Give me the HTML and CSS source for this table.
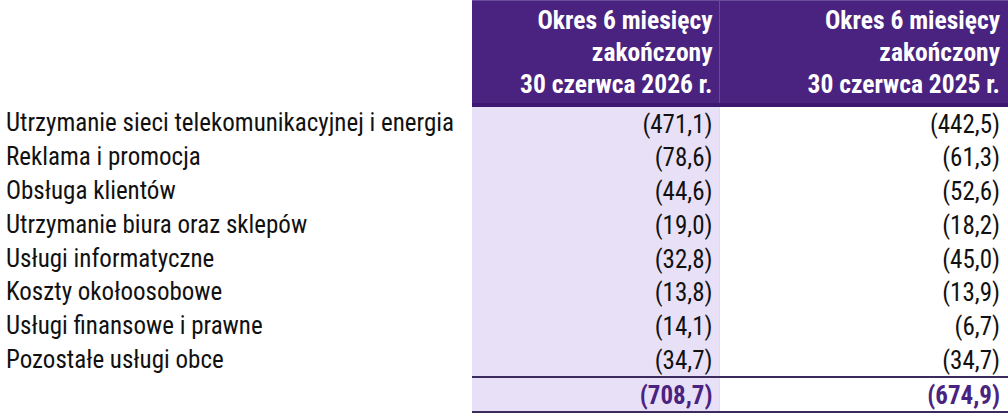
FILE: index.html
```html
<!DOCTYPE html>
<html lang="pl">
<head>
<meta charset="utf-8">
<link rel="stylesheet" href="styles.css">
</head>
<body>
<table class="tbl">
  <colgroup>
    <col class="w-label">
    <col class="w-c1">
    <col class="w-c2">
  </colgroup>
  <thead>
    <tr class="head">
      <th class="label"></th>
      <th class="hcol c1">Okres 6 miesięcy<br>zakończony<br>30 czerwca 2026 r.</th>
      <th class="hcol c2">Okres 6 miesięcy<br>zakończony<br>30 czerwca 2025 r.</th>
    </tr>
  </thead>
  <tbody>
    <tr><td class="label">Utrzymanie sieci telekomunikacyjnej i energia</td><td class="v1">(471,1)</td><td class="v2">(442,5)</td></tr>
    <tr><td class="label">Reklama i promocja</td><td class="v1">(78,6)</td><td class="v2">(61,3)</td></tr>
    <tr><td class="label">Obsługa klientów</td><td class="v1">(44,6)</td><td class="v2">(52,6)</td></tr>
    <tr><td class="label">Utrzymanie biura oraz sklepów</td><td class="v1">(19,0)</td><td class="v2">(18,2)</td></tr>
    <tr><td class="label">Usługi informatyczne</td><td class="v1">(32,8)</td><td class="v2">(45,0)</td></tr>
    <tr><td class="label">Koszty okołoosobowe</td><td class="v1">(13,8)</td><td class="v2">(13,9)</td></tr>
    <tr><td class="label">Usługi finansowe i prawne</td><td class="v1">(14,1)</td><td class="v2">(6,7)</td></tr>
    <tr><td class="label">Pozostałe usługi obce</td><td class="v1">(34,7)</td><td class="v2">(34,7)</td></tr>
    <tr class="total"><td class="label"></td><td class="v1">(708,7)</td><td class="v2">(674,9)</td></tr>
  </tbody>
</table>
</body>
</html>
```
FILE: styles.css
```css
html, body {
  margin: 0;
  padding: 0;
  background: #ffffff;
}
.tbl {
  border-collapse: collapse;
  font-family: "Roboto Condensed", Roboto, "Liberation Sans", sans-serif;
  font-size: 25px;
  color: #111111;
  width: 1008px;
  table-layout: fixed;
}
.w-label { width: 472px; }
.w-c1 { width: 247px; }
.w-c2 { width: 289px; }
.label {
  text-align: left;
  padding: 0 0 0 6px;
  white-space: nowrap;
}
.head th {
  height: 99px;
  padding: 0;
}
.hcol {
  background: #4a2380;
  color: #ffffff;
  font-weight: 700;
  font-size: 25.5px;
  text-align: right;
  line-height: 32px;
  vertical-align: top;
  padding-top: 3px !important;
  border-bottom: 4px solid #3d1870;
  border-top: 1px solid #6c4c9c;
}
.head .c1 {
  padding-right: 6px;
  border-right: 1px solid #6a4a9a;
}
.head .c2 {
  padding-right: 8px;
}
.head .label {
  background: #ffffff;
}
tbody td {
  height: 33.75px;
  padding: 2px 0 0 0;
  line-height: 31px;
  box-sizing: border-box;
}
.v1 {
  background: #e8e0f6;
  text-align: right;
  padding-right: 6px !important;
  border-right: 1px solid #e0dcea;
}
.v2 {
  text-align: right;
  padding-right: 8px !important;
}
.total td {
  height: 35px;
}
.total .v1, .total .v2 {
  font-weight: 700;
  color: #4a2380;
  border-top: 2px solid #3a2a5e;
  border-bottom: 2px solid #3a2a5e;
}
```
